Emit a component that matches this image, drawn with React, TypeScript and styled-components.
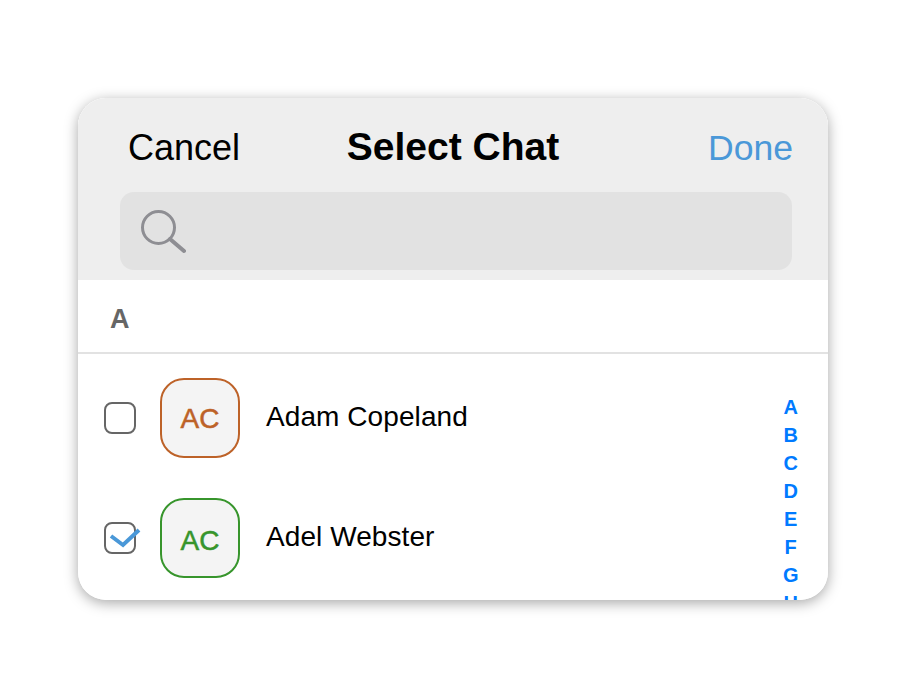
import React from 'react';
import styled, { createGlobalStyle } from 'styled-components';

const GlobalStyle = createGlobalStyle`
  html, body {
    margin: 0;
    padding: 0;
    background: #fff;
    font-family: "Liberation Sans", Arial, sans-serif;
  }
`;

const Page = styled.div`
  width: 906px;
  height: 692px;
  padding: 98px 78px 0;
  box-sizing: border-box;
`;

const Shadow = styled.div`
  width: 750px;
  height: 502px;
  border-radius: 28px;
  box-shadow: 0 3px 14px rgba(0, 0, 0, 0.35);
`;

const Card = styled.div`
  position: relative;
  width: 750px;
  height: 502px;
  border-radius: 28px;
  background: #fff;
  overflow: hidden;
`;

const Header = styled.div`
  height: 182px;
  box-sizing: border-box;
  background: #eeeeee;
  padding: 0 36px 10px 42px;
  display: flex;
  flex-direction: column;
  justify-content: flex-end;
`;

const TitleRow = styled.div`
  display: grid;
  grid-template-columns: 1fr auto 1fr;
  align-items: center;
  padding-left: 8px;
  margin-right: -1px;
  height: 40px;
  margin-bottom: 24px;
`;

const Action = styled.span<{ $accent?: boolean }>`
  font-size: ${(p) => (p.$accent ? '35.6px' : '36px')};
  line-height: 40px;
  color: ${(p) => (p.$accent ? '#4a98d8' : '#000')};
  text-align: ${(p) => (p.$accent ? 'right' : 'left')};
`;

const Title = styled.span`
  font-size: 39px;
  line-height: 40px;
  font-weight: 700;
  color: #000;
  margin: -2px 15px 0 0;
`;

const SearchBox = styled.div`
  height: 78px;
  border-radius: 14px;
  background: #e2e2e2;
  display: flex;
  align-items: center;
  padding-left: 20px;
`;

const SectionHead = styled.div`
  height: 74px;
  box-sizing: border-box;
  border-bottom: 2px solid #e2e2e2;
  padding: 6px 0 0 32px;
  display: flex;
  align-items: center;
  font-size: 27px;
  font-weight: 700;
  color: #666;
`;

const List = styled.div`
  padding-top: 4px;
`;

const Row = styled.div`
  height: 120px;
  display: flex;
  align-items: center;
  padding-left: 26px;
`;

const Check = styled.div`
  position: relative;
  width: 32px;
  height: 32px;
  box-sizing: border-box;
  border: 2px solid #666;
  border-radius: 8px;
  margin-right: 24px;
`;

const Tick = styled.svg`
  position: absolute;
  left: 3px;
  top: -7px;
`;

const Avatar = styled.div<{ $color: string; $drop: number }>`
  width: 80px;
  height: 80px;
  box-sizing: border-box;
  border: 2px solid ${(p) => p.$color};
  border-radius: 24px;
  background: #f4f4f4;
  color: ${(p) => p.$color};
  -webkit-text-stroke: 0.5px ${(p) => p.$color};
  display: flex;
  align-items: center;
  justify-content: center;
  font-size: 28px;
  padding-top: ${(p) => p.$drop}px;
  margin-right: 26px;
`;

const Name = styled.span`
  font-size: 28px;
  letter-spacing: 0.08px;
  color: #000;
  margin-top: -2px;
`;

const AlphaIndex = styled.div`
  position: absolute;
  right: 29.5px;
  top: 295px;
  display: flex;
  flex-direction: column;
  align-items: center;
`;

const Letter = styled.span`
  font-size: 20px;
  line-height: 28px;
  font-weight: 700;
  color: #007aff;
`;

const contacts = [
  { name: 'Adam Copeland', color: '#bd6228', checked: false, drop: 2 },
  { name: 'Adel Webster', color: '#37952c', checked: true, drop: 6 },
];

const App = () => {
  return (
    <Page>
      <GlobalStyle />
      <Shadow>
        <Card>
          <Header>
            <TitleRow>
              <Action>Cancel</Action>
              <Title>Select Chat</Title>
              <Action $accent>Done</Action>
            </TitleRow>
            <SearchBox>
              <svg width="46" height="46" viewBox="0 0 46 46" fill="none">
                <circle cx="18.5" cy="19.5" r="16" stroke="#8e8e93" strokeWidth="3" />
                <path d="M30 31 L44 43" stroke="#8e8e93" strokeWidth="4" strokeLinecap="round" />
              </svg>
            </SearchBox>
          </Header>
          <SectionHead>A</SectionHead>
          <List>
            {contacts.map((c) => (
              <Row key={c.name}>
                <Check>
                  {c.checked && (
                    <Tick width="32" height="32" viewBox="0 0 32 32" fill="none">
                      <path d="M2 19 L14 28 L30 13" stroke="#4a98d8" strokeWidth="4" />
                    </Tick>
                  )}
                </Check>
                <Avatar $color={c.color} $drop={c.drop}>AC</Avatar>
                <Name>{c.name}</Name>
              </Row>
            ))}
          </List>
          <AlphaIndex>
            {'ABCDEFGH'.split('').map((l) => (
              <Letter key={l}>{l}</Letter>
            ))}
          </AlphaIndex>
        </Card>
      </Shadow>
    </Page>
  );
};

export default App;
